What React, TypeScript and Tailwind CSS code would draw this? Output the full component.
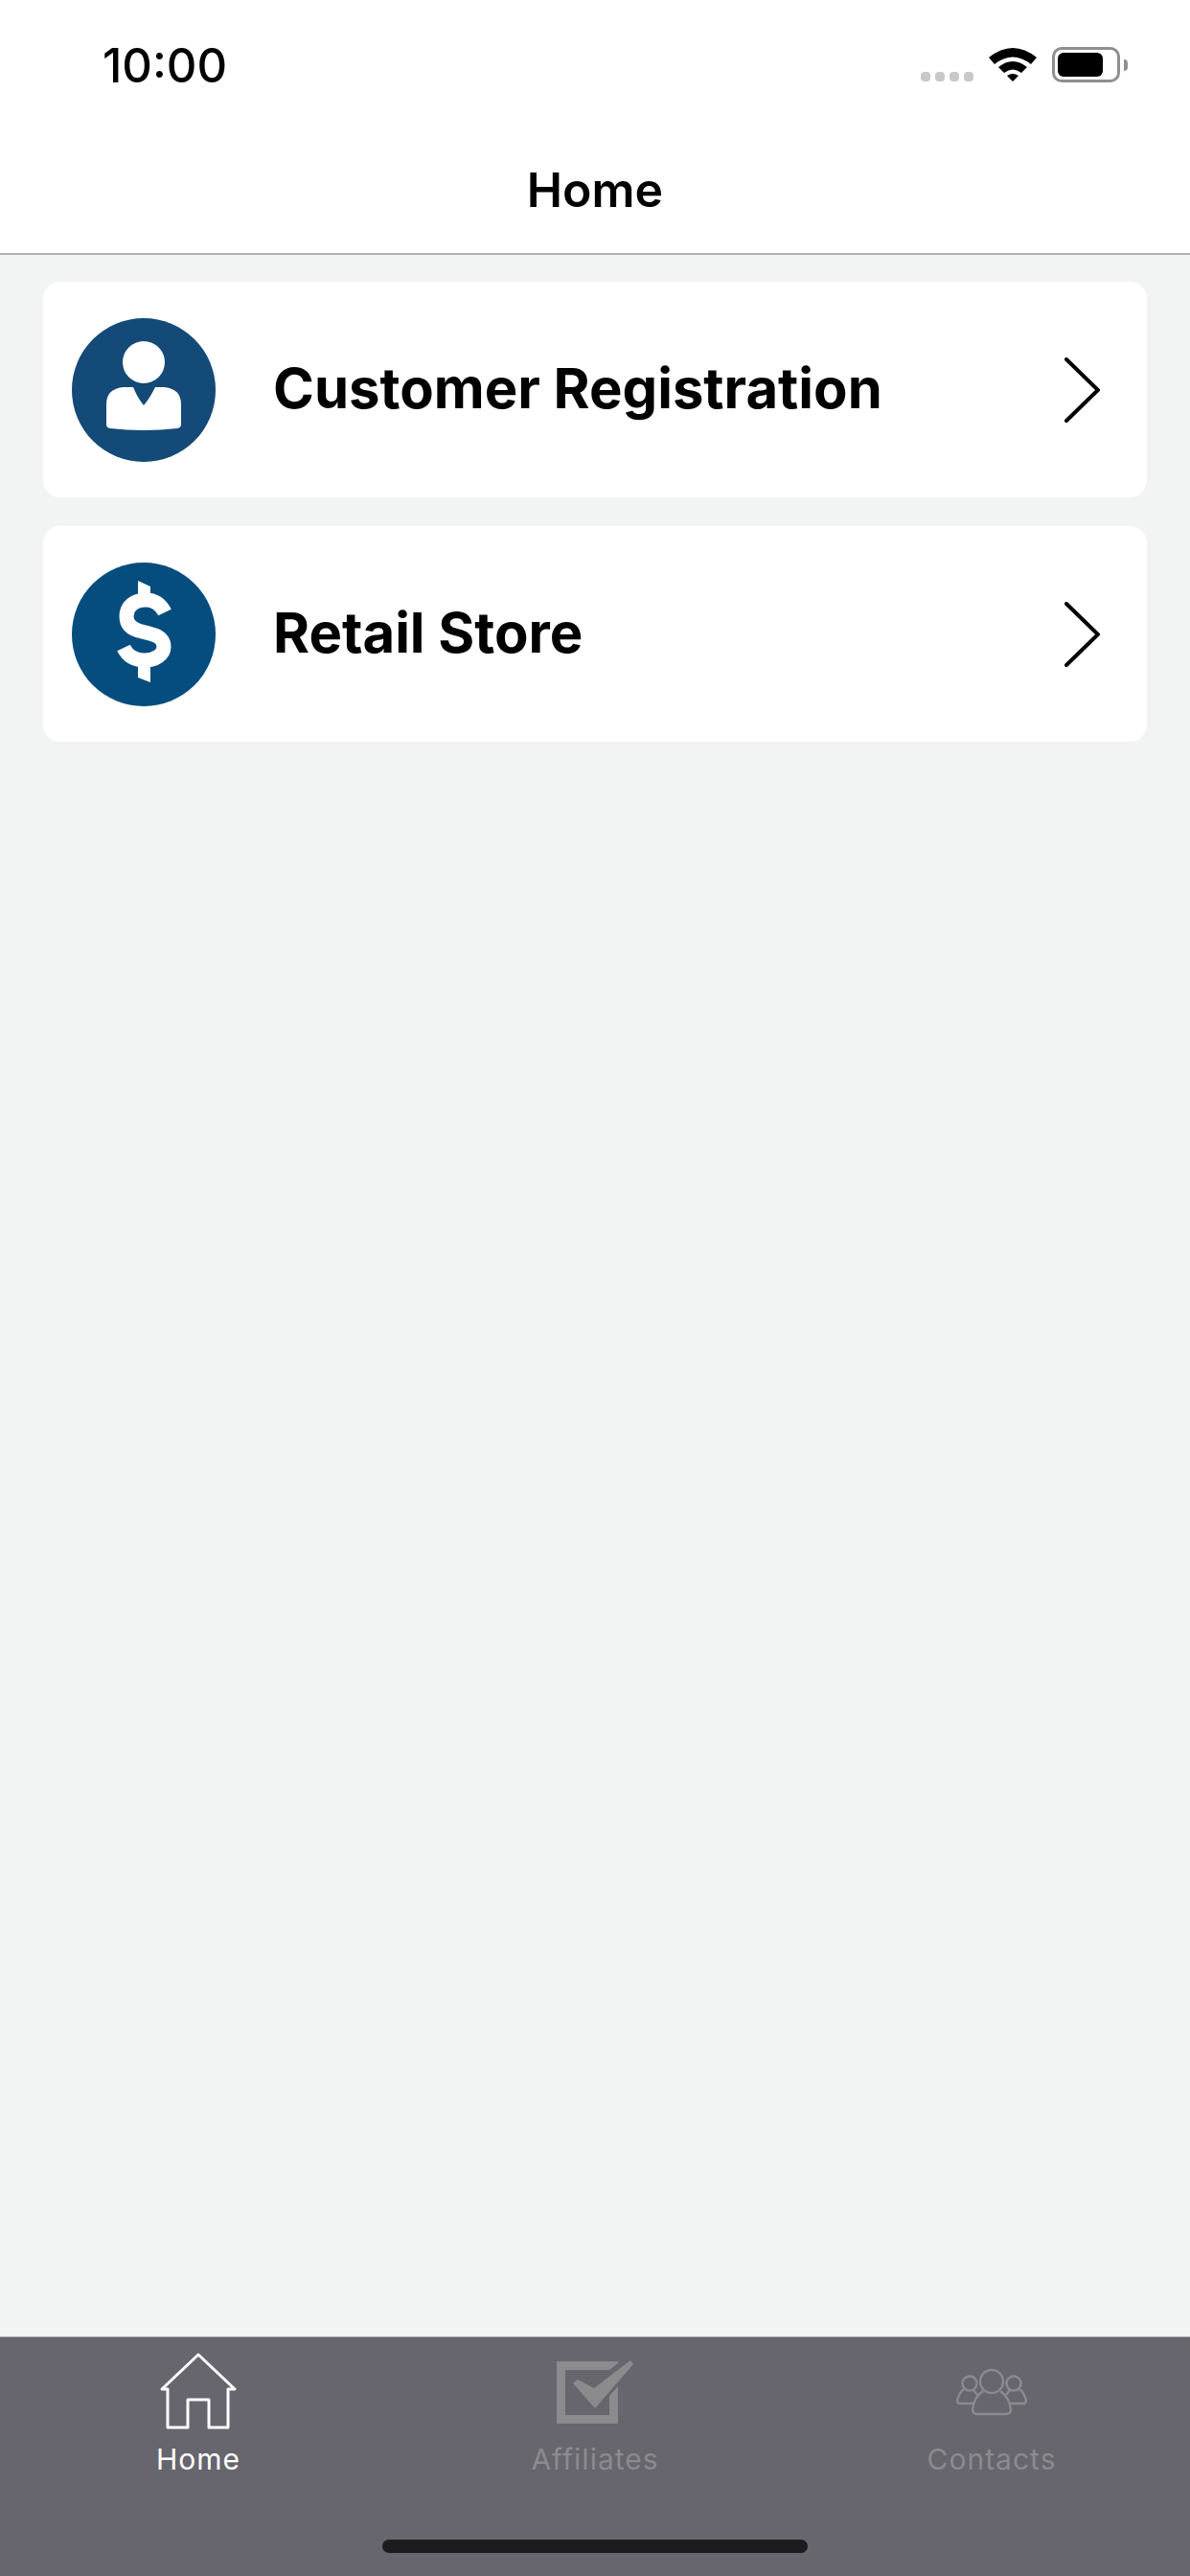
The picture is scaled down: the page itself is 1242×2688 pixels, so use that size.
import React from 'react';

const font = "font-['Inter',sans-serif]";

const PersonIcon = () => (
  <svg viewBox="0 0 150 150" className="w-[150px] h-[150px] shrink-0">
    <circle cx="75" cy="75" r="75" fill="#134a77" />
    <circle cx="75" cy="46" r="22" fill="#fff" />
    <path
      d="M53 72 L64 72 Q69 84 75 91 Q81 84 87 72 L97 72 Q114 74 114 90 L114 111 Q114 114 110 115 Q75 119 40 115 Q36 114 36 111 L36 90 Q36 74 53 72 Z"
      fill="#fff"
    />
  </svg>
);

const DollarIcon = () => (
  <svg viewBox="0 0 150 150" className="w-[150px] h-[150px] shrink-0">
    <circle cx="75" cy="75" r="75" fill="#044d7e" />
    <path d="M69 19 L82 25 L82 36 L69 36 Z M69 104 L82 104 L82 125 L69 120 Z" fill="#fff" />
    <path
      d="M97 52 C93 44 86 39 77 39 C65 39 57 46 57 56 C57 65 63 70 73 72 C86 75 96 77 96 88 C96 96 87 102 76 102 C65 102 58 97 54 89"
      fill="none"
      stroke="#fff"
      strokeWidth="15"
    />
  </svg>
);

const Chevron = () => (
  <svg viewBox="0 0 37 68" className="w-[37px] h-[68px] shrink-0" fill="none" stroke="#000" strokeWidth="4" strokeLinecap="round" strokeLinejoin="miter">
    <path d="M2 2 L35 34 L2 66" />
  </svg>
);

const StatusBar = () => (
  <div className="h-[132px] pl-[107px] pr-[65px] flex items-center justify-between">
    <span className="text-[49px] leading-none font-medium text-black mt-[4px]">10:00</span>
    <div className="flex items-end gap-[16px] mt-[3px]">
      <div className="flex gap-[5px] mb-[1px]">
        <span className="w-[10px] h-[10px] rounded-[4px] bg-[#c8c8c8]" />
        <span className="w-[10px] h-[10px] rounded-[4px] bg-[#c8c8c8]" />
        <span className="w-[10px] h-[10px] rounded-[4px] bg-[#c8c8c8]" />
        <span className="w-[10px] h-[10px] rounded-[4px] bg-[#c8c8c8]" />
      </div>
      <svg viewBox="0 0 50 36" className="w-[50px] h-[36px] mb-[1px]">
        <path d="M0 11 Q25 -9 50 11 L44 18 Q25 3 6 18 Z M10 21 Q25 9 40 21 L34 27 Q25 20 16 27 Z M19 30 Q25 26 31 30 L25 36 Z" fill="#000" />
      </svg>
      <div className="flex items-center">
        <div className="w-[71px] h-[37px] rounded-[10px] border-[3px] border-[#8f8f8f] p-[3px] pr-[15px]">
          <div className="w-full h-full rounded-[6px] bg-black" />
        </div>
        <span className="w-[4px] h-[12px] ml-[4px] bg-[#8f8f8f] rounded-r-[4px]" />
      </div>
    </div>
  </div>
);

const rows = [
  { label: 'Customer Registration', icon: <PersonIcon /> },
  { label: 'Retail Store', icon: <DollarIcon /> },
];

const tabs = [
  {
    label: 'Home',
    active: true,
    icon: (
      <svg viewBox="0 0 80 80" className="w-[80px] h-[80px]" fill="none" stroke="#fff" strokeWidth="3" strokeLinejoin="round">
        <path d="M40 2 L78 38 L71 38 L71 78 L51 78 L51 49 L29 49 L29 78 L8 78 L8 38 L2 38 Z" />
      </svg>
    ),
  },
  {
    label: 'Affiliates',
    active: false,
    icon: (
      <svg viewBox="0 0 80 80" className="w-[80px] h-[80px]" fill="#8b8b8d">
        <path d="M0 9 L64 9 L64 11 L55 18 L9 18 L9 65 L55 65 L55 45 L64 35 L64 74 L0 74 Z" />
        <path d="M17 32 L22 28 L39 37 L77 8 L80 12 L40 58 Z" />
      </svg>
    ),
  },
  {
    label: 'Contacts',
    active: false,
    icon: (
      <svg viewBox="0 0 80 80" className="w-[80px] h-[80px]" fill="none" stroke="#8b8b8d" strokeWidth="2.4">
        <circle cx="40" cy="30" r="12" />
        <path d="M31 40 C25 44 21 51 20 59 Q20 64 25 64 L55 64 Q60 64 60 59 C59 51 55 44 49 40" />
        <circle cx="17" cy="32" r="7.5" />
        <path d="M11 38 C7 41 5 46 4 50 Q4 53 7 53 L22 53 M25 44 L21 39" />
        <circle cx="63" cy="32" r="7.5" />
        <path d="M69 38 C73 41 75 46 76 50 Q76 53 73 53 L58 53 M55 44 L59 39" />
      </svg>
    ),
  },
];

export default function App() {
  return (
    <div className={`${font} w-[1242px] h-[2688px] flex flex-col bg-[#f2f4f3] overflow-hidden`}>
      <header className="bg-white border-b-2 border-[#b0b0b0] h-[266px] shrink-0">
        <StatusBar />
        <h1 className="text-center text-[50px] leading-[60px] font-semibold text-black mt-[36px]">Home</h1>
      </header>

      <main className="flex-1 flex flex-col gap-[30px] pt-[28px] pl-[45px] pr-[45px]">
        {rows.map(row => (
          <div key={row.label} className="h-[225px] bg-white rounded-[18px] flex items-center pl-[30px] pr-[49px]">
            {row.icon}
            <span className="ml-[60px] mb-[3px] flex-1 text-[58px] font-bold text-black">{row.label}</span>
            <Chevron />
          </div>
        ))}
      </main>

      <nav className="relative h-[250px] shrink-0 bg-[#67656e] border-t border-[#a8a8a8] grid grid-cols-3">
        {tabs.map(tab => (
          <div key={tab.label} className="flex flex-col items-center pt-[16px]">
            {tab.icon}
            <span className={`text-[30px] leading-[36px] tracking-[1px] mt-[13px] ${tab.active ? 'text-white' : 'text-[#8b8b8d]'}`}>
              {tab.label}
            </span>
          </div>
        ))}
        <div className="absolute left-[399px] bottom-[24px] w-[444px] h-[14px] rounded-full bg-[#1c1c1e]" />
      </nav>
    </div>
  );
}
